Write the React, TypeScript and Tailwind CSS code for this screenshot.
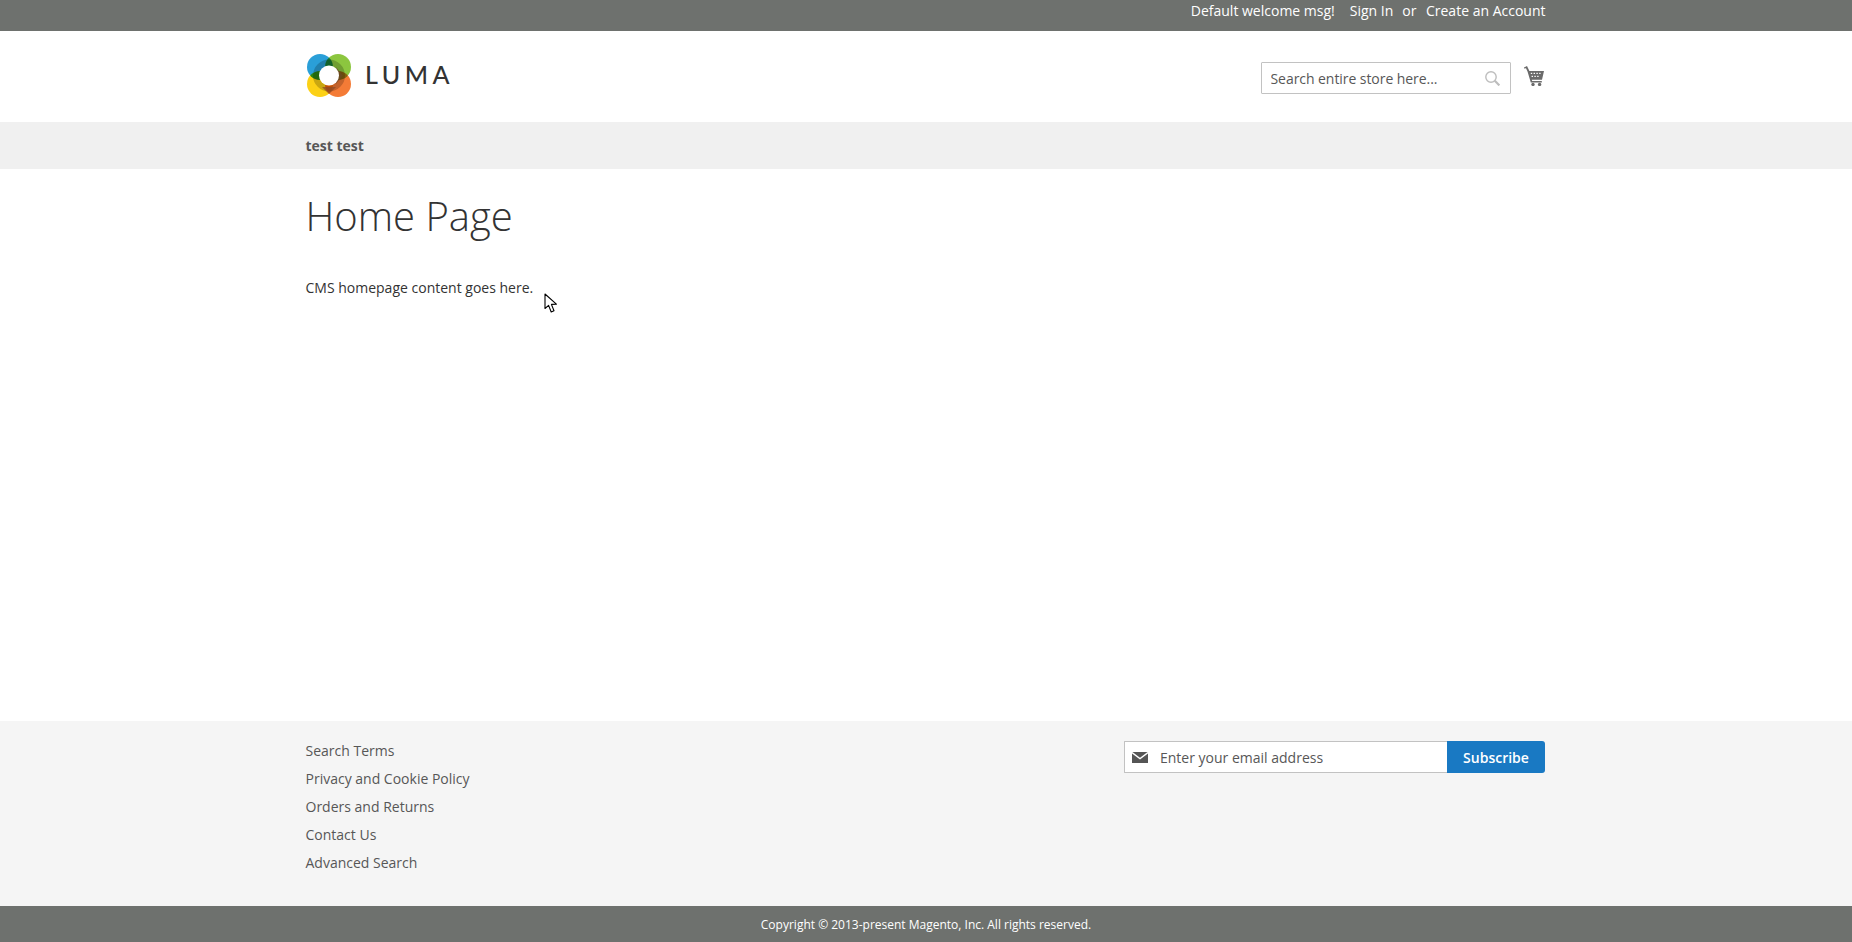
import { useState } from "react";

const FOOTER_LINKS = [
  "Search Terms",
  "Privacy and Cookie Policy",
  "Orders and Returns",
  "Contact Us",
  "Advanced Search",
];

const LumaMark = () => (
  <svg className="isolate" width={44} height={43} viewBox="0 0 44 43">
    <circle cx="13" cy="13" r="13" fill="#2a9fd8" className="mix-blend-multiply" />
    <circle cx="31" cy="13" r="13" fill="#8cc63f" className="mix-blend-multiply" />
    <circle cx="13" cy="30" r="13" fill="#fcd116" className="mix-blend-multiply" />
    <circle cx="31" cy="30" r="13" fill="#f47b36" className="mix-blend-multiply" />
    <circle cx="22" cy="21.5" r="13" fill="none" stroke="#000000" strokeOpacity={0.2} strokeWidth={6} />
    <path d="M15 33 H29 L22 40 Z" fill="#8f4a24" fillOpacity={0.75} />
    <path d="M36 21.5 L29 13 V30 Z" fill="#6b4a2a" fillOpacity={0.6} />
    <circle cx="22" cy="21.5" r="10" fill="#ffffff" />
  </svg>
);

const CartIcon = () => (
  <svg width={20} height={20} viewBox="0 0 20 20" fill="#6b6b6b">
    <path d="M0 1.4 L3 0 L5.4 5 H20 L18 13.8 H7.8 L8.2 15 H17.8 V16.4 H6.8 L3.6 5.8 L2 2.2 L0 2.6 Z" />
    <g fill="#ffffff">
      <rect x="6.8" y="6.8" width="1.4" height="1.2" />
      <rect x="9.6" y="6.8" width="1.4" height="1.2" />
      <rect x="12.4" y="6.8" width="1.4" height="1.2" />
      <rect x="15.2" y="6.8" width="1.4" height="1.2" />
      <rect x="7.6" y="9.8" width="1.4" height="1.2" />
      <rect x="10.4" y="9.8" width="1.4" height="1.2" />
      <rect x="13.2" y="9.8" width="1.4" height="1.2" />
    </g>
    <circle cx="9" cy="18.4" r="1.7" />
    <circle cx="15.6" cy="18.4" r="1.7" />
  </svg>
);

const SearchIcon = () => (
  <svg width={15} height={15} viewBox="0 0 15 15" fill="none" stroke="#bdbdbd" strokeWidth={1.4}>
    <circle cx="6" cy="6" r="5.2" />
    <path d="M9.8 9.8 L14.4 14.4" strokeWidth={2.2} />
  </svg>
);

const MailIcon = () => (
  <svg width={16} height={11} viewBox="0 0 16 11" fill="#555555">
    <path d="M0.4 0 H15.6 L8 5.8 Z" />
    <path d="M0 1.6 L8 7.6 L16 1.6 V11 H0 Z" />
  </svg>
);

const Pointer = () => (
  <svg className="absolute left-[544px] top-[293px]" width={14} height={21} viewBox="0 0 14 21">
    <path d="M1 1 V15.5 L4.6 12.4 L7.2 19 L10 17.8 L7.4 11.4 L12.4 11.2 Z" fill="#ffffff" stroke="#000000" strokeWidth={1.1} strokeLinejoin="round" />
  </svg>
);

export default function App() {
  const [query, setQuery] = useState("");
  const [email, setEmail] = useState("");

  return (
    <div className="relative flex min-h-[942px] flex-col bg-white font-['Open_Sans',sans-serif] text-[14px] text-[#333333]">
      <div className="h-[31px] bg-[#6e716e] text-white">
        <div className="ml-[305.5px] flex h-[21px] w-[1240px] items-center justify-end leading-[21px]">
          <span>Default welcome msg!</span>
          <a className="ml-[15px]">Sign In</a>
          <span className="ml-[9px]">or</span>
          <a className="ml-[9.5px]">Create an Account</a>
        </div>
      </div>

      <header className="h-[91px]">
        <div className="ml-[305px] flex h-full w-[1240px] items-center justify-between">
          <div className="flex items-center gap-[14px] pl-[2px]">
            <div className="-mt-[2px]">
              <LumaMark />
            </div>
            <span className="-mt-[5px] font-['Lato',sans-serif] text-[25px] font-medium leading-none tracking-[4.5px] text-[#333333]">LUMA</span>
          </div>
          <div className="flex items-center gap-[13px] pr-px pt-[3px]">
            <div className="flex h-[32px] w-[250px] items-center rounded-[1px] border border-[#c2c2c2] bg-white pl-[8.5px] pr-[10px]">
              <input
                value={query}
                onChange={e => setQuery(e.target.value)}
                placeholder="Search entire store here..."
                className="min-w-0 flex-1 bg-transparent tracking-[-0.06px] outline-none placeholder:text-[#575757]"
              />
              <SearchIcon />
            </div>
            <div className="-mt-[4px]">
              <CartIcon />
            </div>
          </div>
        </div>
      </header>

      <nav className="h-[47px] bg-[#f0f0f0]">
        <div className="ml-[305.5px] flex h-full w-[1240px] items-center font-bold text-[#575757]">test test</div>
      </nav>

      <main className="ml-[305.5px] w-[1240px] flex-1">
        <h1 className="mt-[19px] text-[40px] font-light leading-[56px] text-[#333333]">Home Page</h1>
        <p className="mt-[34px] leading-[20px]">CMS homepage content goes here.</p>
      </main>

      <footer className="h-[185px] bg-[#f5f5f5]">
        <div className="flex w-[1545px] justify-between pl-[305.5px] pt-[20px]">
          <ul className="flex flex-col gap-[8px] leading-[20px] text-[#575757]">
            {FOOTER_LINKS.map(label => (
              <li key={label}>{label}</li>
            ))}
          </ul>
          <div className="flex h-[32px] w-[421px]">
            <div className="flex flex-1 items-center rounded-l-[1px] border border-r-0 border-[#c2c2c2] bg-white pl-[7px]">
              <MailIcon />
              <input
                value={email}
                onChange={e => setEmail(e.target.value)}
                placeholder="Enter your email address"
                className="ml-[12px] min-w-0 flex-1 bg-transparent outline-none placeholder:text-[#575757]"
              />
            </div>
            <button className="w-[98px] rounded-r-[3px] bg-[#1979c3] font-semibold text-white">Subscribe</button>
          </div>
        </div>
      </footer>

      <div className="flex h-[36px] items-center justify-center bg-[#6e716e] pt-[2px] text-[12px] text-white">
        Copyright © 2013-present Magento, Inc. All rights reserved.
      </div>

      <Pointer />
    </div>
  );
}
